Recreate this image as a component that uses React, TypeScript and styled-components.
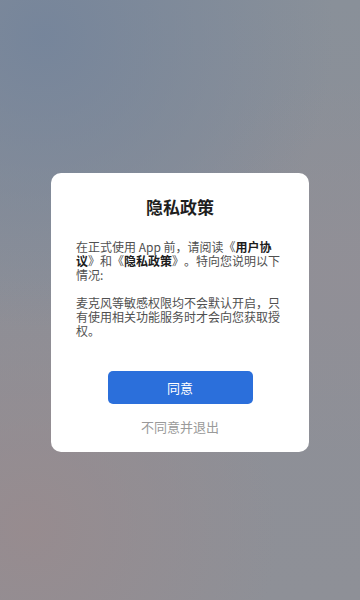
import React from "react";
import styled, { createGlobalStyle } from "styled-components";

const Global = createGlobalStyle`
  html, body { margin: 0; padding: 0; }
  body {
    font-family: "Noto Sans CJK SC", "Noto Sans", sans-serif;
    -webkit-font-smoothing: antialiased;
  }
`;

const Backdrop = styled.div`
  width: 360px;
  height: 600px;
  box-sizing: border-box;
  padding-top: 25px;
  display: flex;
  align-items: center;
  justify-content: center;
  background:
    radial-gradient(circle at 12% 6%, rgba(116, 132, 155, 0.9) 0%, rgba(116, 132, 155, 0) 45%),
    radial-gradient(circle at 8% 88%, rgba(152, 139, 142, 0.9) 0%, rgba(152, 139, 142, 0) 40%),
    radial-gradient(circle at 95% 45%, rgba(146, 143, 150, 0.8) 0%, rgba(146, 143, 150, 0) 40%),
    linear-gradient(180deg, #899099 0%, #8d8f97 50%, #8e9097 100%);
`;

const Card = styled.div`
  width: 258px;
  box-sizing: border-box;
  background: #ffffff;
  border-radius: 10px;
  padding: 22px 0 16px;
  display: flex;
  flex-direction: column;
  align-items: center;
`;

const Title = styled.h1`
  margin: 0;
  font-size: 17px;
  line-height: 24px;
  font-weight: 700;
  color: #1e1e1e;
`;

const Body = styled.div`
  width: 206px;
  margin: 21px 27px 0 25px;
  align-self: flex-start;
  font-size: 12px;
  line-height: 14px;
  color: #505050;
  text-spacing-trim: space-all;
`;

const Para = styled.p`
  margin: 0 0 14px;
  &:last-child { margin-bottom: 0; }
`;

const Link = styled.span`
  color: #1c1c1c;
  font-weight: 700;
`;

const AgreeButton = styled.button`
  margin-top: 33px;
  width: 145px;
  height: 33px;
  border: none;
  border-radius: 5px;
  background: #2b6fdb;
  color: #ffffff;
  font-family: inherit;
  font-size: 13px;
  cursor: pointer;
`;

const Refuse = styled.button`
  margin-top: 14px;
  border: none;
  background: transparent;
  padding: 0;
  font-family: inherit;
  font-size: 13px;
  line-height: 18px;
  color: #9a9a9a;
  cursor: pointer;
`;

export default function App() {
  return (
    <>
      <Global />
      <Backdrop>
        <Card>
          <Title>隐私政策</Title>
          <Body>
            <Para>
              在正式使用 App 前，请阅读《<Link>用户协议</Link>》和《<Link>隐私政策</Link>》。特向您说明以下情况:
            </Para>
            <Para>麦克风等敏感权限均不会默认开启，只有使用相关功能服务时才会向您获取授权。</Para>
          </Body>
          <AgreeButton>同意</AgreeButton>
          <Refuse>不同意并退出</Refuse>
        </Card>
      </Backdrop>
    </>
  );
}
